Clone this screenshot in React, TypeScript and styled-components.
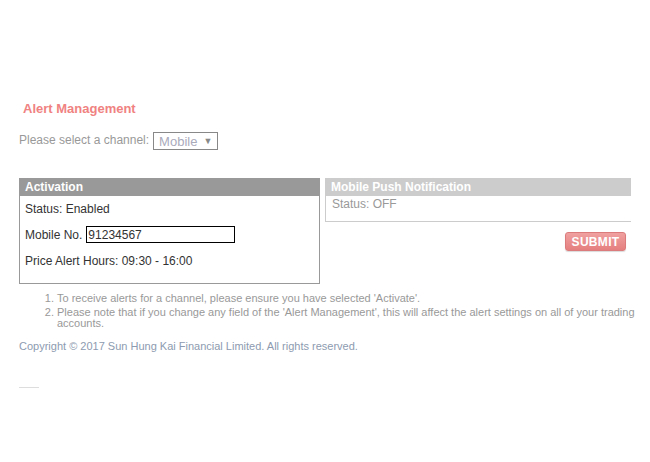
import React from "react";
import styled, { createGlobalStyle } from "styled-components";

const GlobalStyle = createGlobalStyle`
  body {
    margin: 0;
    background: #fff;
    font-family: "Liberation Sans", Arial, sans-serif;
  }
`;

const App = () => {
  return (
    <Page>
      <GlobalStyle />
      <Title>Alert Management</Title>
      <ChannelRow>
        Please select a channel:
        <Select>
          Mobile <Arrow>▼</Arrow>
        </Select>
      </ChannelRow>

      <Panels>
        <Panel tone="#999">
          <PanelHead tone="#999">Activation</PanelHead>
          <ActivationBody>
            <Line>Status: Enabled</Line>
            <Line>
              Mobile No. <PhoneInput defaultValue="91234567" />
            </Line>
            <Line>Price Alert Hours: 09:30 - 16:00</Line>
          </ActivationBody>
        </Panel>
        <RightColumn>
          <PushPanel>
            <PanelHead tone="#ccc">Mobile Push Notification</PanelHead>
            <PushBody>Status: OFF</PushBody>
          </PushPanel>
          <Submit>SUBMIT</Submit>
        </RightColumn>
      </Panels>

      <Notes>
        <li>To receive alerts for a channel, please ensure you have selected 'Activate'.</li>
        <li>
          Please note that if you change any field of the 'Alert Management', this will affect the
          alert settings on all of your trading accounts.
        </li>
      </Notes>

      <Copyright>Copyright © 2017 Sun Hung Kai Financial Limited. All rights reserved.</Copyright>
      <Rule />
    </Page>
  );
};

export default App;

const Page = styled.div`
  width: 612px;
  padding: 101px 19px 0;
`;

const Title = styled.h1`
  margin: 0 0 0 4px;
  font-size: 13px;
  line-height: 16px;
  font-weight: 700;
  color: #f08282;
`;

const ChannelRow = styled.div`
  display: flex;
  align-items: center;
  gap: 4px;
  margin-top: 13px;
  font-size: 12px;
  color: #999;
`;

const Select = styled.div`
  display: flex;
  align-items: center;
  gap: 6px;
  height: 16px;
  padding: 0 5px;
  border: 1px solid #888;
  font-size: 13px;
  color: #aab;
  margin-top: 2px;
`;

const Arrow = styled.span`
  font-size: 9px;
  color: #888;
`;

const Panels = styled.div`
  display: flex;
  gap: 5px;
  margin-top: 28px;
`;

const Panel = styled.div<{ tone: string }>`
  width: 299px;
  border: 1px solid ${({ tone }) => tone};
  border-top: none;
`;

const PanelHead = styled.div<{ tone: string }>`
  height: 18px;
  line-height: 18px;
  padding: 0 5px;
  background: ${({ tone }) => tone};
  color: #fff;
  font-size: 12px;
  font-weight: 700;
`;

const ActivationBody = styled.div`
  display: flex;
  flex-direction: column;
  gap: 10px;
  padding: 6px 5px 15px;
`;

const Line = styled.div`
  display: flex;
  align-items: center;
  gap: 4px;
  min-height: 14px;
  font-size: 12px;
  color: #333;

  & + & + & {
    margin-top: 1px;
  }
`;

const PhoneInput = styled.input`
  width: 145px;
  height: 15px;
  box-sizing: content-box;
  padding: 0 1px;
  margin: 0;
  border: 1px solid #000;
  font-family: "Liberation Sans", Arial, sans-serif;
  font-size: 12px;
  color: #333;
  outline: none;
`;

const RightColumn = styled.div`
  width: 306px;
  display: flex;
  flex-direction: column;
  align-items: flex-end;
`;

const PushPanel = styled.div`
  width: 305px;
  align-self: stretch;
  border-left: 1px solid #ccc;
  border-bottom: 1px solid #ccc;
`;

const PushBody = styled.div`
  height: 14px;
  line-height: 14px;
  padding: 1px 6px 10px;
  font-size: 12px;
  color: #999;
`;

const Submit = styled.button`
  margin: 10px 5px 0 0;
  width: 61px;
  height: 19px;
  padding: 0;
  border: 1px solid #dc7b7b;
  border-radius: 3px;
  background: linear-gradient(#f0a0a0, #e57f7f);
  box-shadow: 0 1px 1px rgba(0, 0, 0, 0.15);
  color: #fff;
  font-family: "Liberation Sans", Arial, sans-serif;
  font-size: 12px;
  font-weight: 700;
  letter-spacing: 0.3px;
  cursor: pointer;
`;

const Notes = styled.ol`
  margin: 9px -12px 0 0;
  padding: 0 0 0 38px;
  font-size: 11px;
  line-height: 11px;
  color: #999;

  li + li {
    margin-top: 3px;
  }
`;

const Copyright = styled.div`
  margin-top: 11px;
  font-size: 11px;
  line-height: 13px;
  color: #8d9bb0;
`;

const Rule = styled.div`
  width: 20px;
  margin-top: 34px;
  border-top: 1px solid #ddd;
`;
